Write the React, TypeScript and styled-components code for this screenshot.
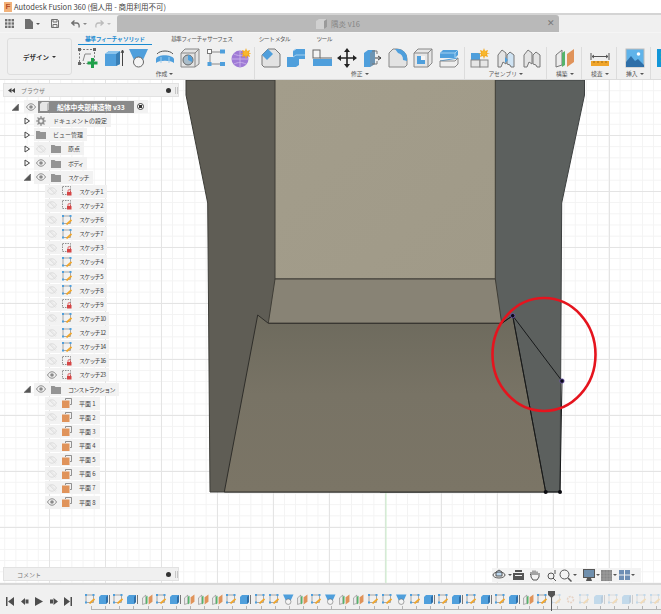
import React from "react";
import styled, { createGlobalStyle } from "styled-components";

const GlobalStyle = createGlobalStyle`
  html, body { margin: 0; padding: 0; }
  body {
    font-family: "Noto Sans CJK JP", "Noto Sans", "Liberation Sans", sans-serif;
    overflow: hidden;
    color: #444;
  }
  svg { display: block; flex: none; }
`;

const BLUE = "#4f9fdc";
const ORANGE = "#e0935a";
const GREEN = "#55b36b";

/* ---------- ribbon icons (20x20) ---------- */

const Ico = ({ children, size = 20 }: { children: React.ReactNode; size?: number }) => (
  <svg width={size} height={size} viewBox="0 0 20 20" fill="none">
    {children}
  </svg>
);

const SketchNew = () => (
  <Ico>
    <rect x="1.500" y="1.500" width="15" height="14" stroke="#777" strokeDasharray="2 1.500" />
    {[[0, 0], [15, 0], [0, 14]].map(([x, y]) => (
      <rect key={`${x}${y}`} x={x} y={y} width="3" height="3" fill="#666" />
    ))}
    <path d="M5 13l2-7h6" stroke="#888" />
    <path d="M14.500 10v10M9.500 15h10" stroke="#1fa04a" strokeWidth="3" />
  </Ico>
);
const Extrude = () => (
  <Ico>
    <path d="M1 6l4-3h11v13l-4 2H1z" fill={BLUE} />
    <path d="M12 6l4-3v13l-4 2z" fill="#3a7fb5" />
    <path d="M1 6l4-3h11l-4 3z" fill="#8cc4ec" />
    <path d="M18.500 18V3M17 5l1.500-3 1.500 3" stroke="#444" />
  </Ico>
);
const Revolve = () => (
  <Ico>
    <path d="M0 1h19l-5 11a5 5 0 0 1-9 0z" fill={BLUE} />
    <circle cx="9.500" cy="14" r="5" fill="#f4f4f4" stroke="#666" />
  </Ico>
);
const Sweep = () => (
  <Ico>
    <path d="M1 15V11C2 6 17 6 19 11v4c-3-3-15-3-18 0z" fill={BLUE} />
    <path d="M2 6c3-4 13-4 16 0" stroke="#555" />
    <path d="M6 9v6M14 9v6" stroke="#a3d0f0" />
  </Ico>
);
const Hole = () => (
  <Ico>
    <path d="M1 5l4-4h14v15l-4 3H1z" fill="#e3e3e3" stroke="#888" />
    <path d="M1 5h14v14M15 5l4-4" stroke="#888" />
    <circle cx="8" cy="12" r="5" fill="#a9bcc9" stroke="#666" />
    <path d="M8 7a5 5 0 0 1 4 7l-4-2z" fill={BLUE} />
  </Ico>
);
const Pattern = () => (
  <Ico>
    <path d="M5 4h10M4 5v11M5 16h10" stroke="#888" />
    <rect x="1.500" y="1.500" width="4" height="4" fill="#fff" stroke="#777" />
    <rect x="14" y="1.500" width="5" height="4" fill={BLUE} />
    <rect x="1.500" y="14" width="4" height="4" fill={BLUE} />
    <rect x="14" y="14" width="5" height="4" fill={BLUE} />
  </Ico>
);
const Sun = ({ cx, cy }: { cx: number; cy: number }) => (
  <>
    <path
      d={`M${cx} ${cy - 5}l1 3 3-1-1 3 3 0-3 1 1 3-3-1-1 3-1-3-3 1 1-3-3-1 3 0-1-3 3 1z`}
      fill="#f3a81f"
    />
    <circle cx={cx} cy={cy} r="2.500" fill="#f8b72d" />
  </>
);
const Form = () => (
  <Ico>
    <circle cx="9" cy="11" r="8.500" fill="#9f7ad6" />
    <path d="M1 11h16M9 3v16M3 6c4 2 8 2 12 0M3 16c4-2 8-2 12 0" stroke="#c7aee9" />
    <Sun cx={15} cy={5} />
  </Ico>
);
const Press = () => (
  <Ico>
    <path d="M1 7l6-6h7l5 5v12l-2 1H3l-2-2z" fill="#e2e2e2" stroke="#777" />
    <path d="M1 7l6-6 5 5-6 6z" fill={BLUE} />
  </Ico>
);
const Steps = () => (
  <Ico>
    <path d="M1 9h6V3l3-2h9v10h-6v6l-3 2H1z" fill={BLUE} />
    <path d="M7 9l3-2h9M7 3l3-2" stroke="#a3d0f0" />
  </Ico>
);
const Align = () => (
  <Ico>
    <rect x="1" y="2" width="7" height="8" fill="#f4f4f4" stroke="#666" />
    <rect x="1" y="11" width="19" height="7" fill={BLUE} />
    <path d="M8 10h12" stroke="#666" />
  </Ico>
);
const MoveIco = () => (
  <Ico>
    <path d="M10 3v14M3 10h14" stroke="#222" strokeWidth="1.600" />
    <path d="M10 0l3 4H7zM10 20l3-4H7zM0 10l4-3v6zM20 10l-4-3v6z" fill="#222" />
  </Ico>
);
const Split = () => (
  <Ico>
    <path d="M1 5l4-3h7v14l-5 3H1z" fill={BLUE} />
    <path d="M7 5l5-3v14l-5 3z" fill="#8a8a8a" opacity=".5" />
    <path d="M9 3h5v3M9 16h5v-3" stroke="#777" />
    <path d="M12 10h6M15 8l3 2-3 2" stroke="#444" />
  </Ico>
);
const Fillet = () => (
  <Ico>
    <path d="M1 5l4-4h4a10 10 0 0 1 10 10v6l-2 2H1z" fill="#e3e3e3" stroke="#888" />
    <path d="M7 1h3a9 9 0 0 1 9 9v3l-4-1a7 7 0 0 0-5-7z" fill={BLUE} />
  </Ico>
);
const Shell = () => (
  <Ico>
    <path d="M1 5l4-4h14v14l-4 4H1z" fill="#e6e6e6" stroke="#888" />
    <path d="M1 5h14v14M15 5l4-4" stroke="#888" />
    <rect x="4" y="8" width="8" height="8" fill="#f5f5f5" />
    <path d="M4 8h4v4h4v4H4z" fill={BLUE} />
  </Ico>
);
const Combine = () => (
  <Ico>
    <path d="M1 5l3-3h15v5l-3 3H1z" fill={BLUE} />
    <path d="M1 5h15v5M16 5l3-3" stroke="#a3d0f0" />
    <path d="M1 13l18-3" stroke={BLUE} />
    <path d="M1 13h15l3-3v6l-3 3H1z" fill="#eee" stroke="#888" />
  </Ico>
);
const CubeSun = () => (
  <Ico>
    <rect x="1" y="5" width="9" height="7" fill={BLUE} />
    <rect x="1" y="12" width="9" height="7" fill="#e6e6e6" stroke="#888" />
    <rect x="10" y="12" width="8" height="7" fill="#e6e6e6" stroke="#888" />
    <Sun cx={14} cy={5} />
  </Ico>
);
const Joint = ({ active }: { active?: boolean }) => (
  <Ico>
    <path d="M2 19V7l4-5 4 3v11l-3-2-2 5z" fill="#e4e4e4" stroke="#777" />
    <path d="M18 19V7l-4-3-3 3v9l3 1 1 2z" fill={active ? "#cfe3f3" : "#e4e4e4"} stroke="#777" />
    {active && <path d="M9 9l3 3-3 3z" fill={BLUE} />}
  </Ico>
);
const Plane = () => (
  <Ico>
    <path d="M1 7l6-5v15l-6 2z" fill="#ececec" stroke="#777" />
    <path d="M7 5l3-2v14l-3 2z" fill={GREEN} />
    <path d="M12 6l7-5v13l-7 5z" fill={ORANGE} />
  </Ico>
);
const Measure = () => (
  <Ico>
    <path d="M1 5v7M19 5v7M2 8.500h16M2 8.500l2-1.500M2 8.500l2 1.500M18 8.500l-2-1.500M18 8.500l-2 1.500" stroke="#555" />
    <rect x="1" y="13" width="18" height="5" fill="#f0a52a" />
    <path d="M4 13v2M8 13v2M12 13v2M16 13v2" stroke="#a36d10" />
  </Ico>
);
const Picture = () => (
  <Ico>
    <rect x="1" y="1" width="18" height="18" fill="#5fb3ea" stroke="#bbb" />
    <circle cx="13.500" cy="6" r="1.800" fill="#fff" />
    <path d="M1 19v-5l5-6 4 5 3-2 6 6v2z" fill="#2f6fa8" />
  </Ico>
);
const SelectIco = () => (
  <Ico>
    <rect x="0" y="1" width="20" height="18" fill="#1296d8" />
    <path d="M3 5h10M3 9h10M3 13h10" stroke="#26b5a0" strokeDasharray="2 2" />
  </Ico>
);

const ribbonGroups = [
  { label: "作成", offset: 0, trail: 3, gap: 5.500, icons: [SketchNew, Extrude, Revolve, Sweep, Hole, Pattern, Form] },
  { label: "修正", offset: 6, trail: 5, gap: 5.400, icons: [Press, Steps, Align, MoveIco, Split, Fillet, Shell, Combine] },
  { label: "アセンブリ", offset: 5, trail: 4, gap: 6, icons: [CubeSun, () => <Joint active />, () => <Joint />] },
  { label: "構築", offset: 8, trail: 6, gap: 0, icons: [Plane] },
  { label: "検査", offset: 8, trail: 6, gap: 0, icons: [Measure] },
  { label: "挿入", offset: 8, trail: 5, gap: 0, icons: [Picture] },
  { label: "選択", offset: 6, trail: 0, gap: 0, icons: [SelectIco] },
];

/* ---------- browser tree icons ---------- */

const EyeIcon = ({ off }: { off?: boolean }) => (
  <svg width="10" height="8" viewBox="0 0 10 8" fill="none">
    <path d="M.5 4C2 1.500 3.500.8 5 .8S8 1.500 9.500 4C8 6.500 6.500 7.200 5 7.200S2 6.500.5 4z" stroke={off ? "#dcdcdc" : "#8a8a8a"} strokeWidth="1" />
    {off ? (
      <path d="M1.500.5l7 7M3 .5l6 6" stroke="#dcdcdc" strokeWidth=".8" />
    ) : (
      <circle cx="5" cy="4" r="1.800" fill="#8a8a8a" />
    )}
  </svg>
);
const FolderIcon = () => (
  <svg width="10" height="9" viewBox="0 0 10 9">
    <path d="M0 1h3.500l1 1H10v7H0z" fill="#949494" />
  </svg>
);
const GearIcon = () => (
  <svg width="10" height="10" viewBox="0 0 10 10" fill="none">
    <circle cx="5" cy="5" r="2.600" stroke="#8f8f8f" strokeWidth="1.800" />
    <path d="M5 0v2M5 8v2M0 5h2M8 5h2M1.500 1.500l1.500 1.500M7 7l1.500 1.500M8.500 1.500L7 3M3 7L1.500 8.500" stroke="#8f8f8f" strokeWidth="1.200" />
  </svg>
);
const SketchLocked = () => (
  <svg width="10" height="10" viewBox="0 0 10 10" fill="none">
    <rect x=".5" y=".5" width="8" height="8" stroke="#777" strokeDasharray="1.500 1" strokeWidth=".8" />
    <rect x="5" y="6" width="4.500" height="3.500" fill="#d64545" />
    <path d="M6 6V4.800a1.200 1.200 0 0 1 2.400 0V6" stroke="#d64545" strokeWidth=".8" />
  </svg>
);
const SketchOpen = () => (
  <svg width="10" height="10" viewBox="0 0 10 10" fill="none">
    <rect x="1" y="1" width="7.500" height="7.500" stroke="#888" strokeWidth=".7" />
    {[[0, 0], [7.500, 0], [0, 7.500]].map(([x, y]) => (
      <rect key={`${x}${y}`} x={x} y={y} width="2" height="2" fill={BLUE} />
    ))}
    <path d="M4.500 9.500L9.500 5" stroke="#f0a52a" strokeWidth="1.700" />
  </svg>
);
const PlaneIcon = () => (
  <svg width="10" height="10" viewBox="0 0 10 10" fill="none">
    <path d="M3.500 2V.5h6v6H8" stroke="#777" strokeWidth=".8" />
    <rect x="0" y="2.500" width="7.500" height="7.500" fill="#e0935a" />
  </svg>
);
const Caret = ({ open }: { open: boolean }) => (
  <svg width="7" height="8" viewBox="0 0 7 8">
    {open ? (
      <path d="M0 7.500L6.500 1v6.500z" fill="#555" stroke="#555" strokeWidth=".5" />
    ) : (
      <path d="M1 1l4.500 3L1 7z" fill="#fff" stroke="#444" />
    )}
  </svg>
);

type TreeRow = {
  level: 1 | 2;
  text: string;
  eye?: "on" | "off";
  icon: React.ComponentType;
  open?: boolean;
  tight?: boolean;
};

const sk = (n: number, icon: React.ComponentType, eye: "on" | "off" = "off"): TreeRow => ({
  level: 2,
  text: `スケッチ ${n}`,
  eye,
  icon,
  tight: true,
});
const pl = (n: number, eye: "on" | "off" = "off"): TreeRow => ({
  level: 2,
  text: `平面 ${n}`,
  eye,
  icon: PlaneIcon,
});

const treeRows: TreeRow[] = [
  { level: 1, text: "ドキュメントの設定", icon: GearIcon, open: false },
  { level: 1, text: "ビュー管理", icon: FolderIcon, open: false },
  { level: 1, text: "原点", eye: "off", icon: FolderIcon, open: false },
  { level: 1, text: "ボディ", eye: "on", icon: FolderIcon, open: false, tight: true },
  { level: 1, text: "スケッチ", eye: "on", icon: FolderIcon, open: true, tight: true },
  sk(1, SketchLocked),
  sk(2, SketchLocked),
  sk(6, SketchOpen),
  sk(7, SketchOpen),
  sk(3, SketchLocked),
  sk(4, SketchOpen),
  sk(5, SketchOpen),
  sk(8, SketchOpen),
  sk(9, SketchLocked),
  sk(10, SketchOpen),
  sk(12, SketchOpen),
  sk(14, SketchOpen),
  sk(16, SketchLocked),
  sk(23, SketchLocked, "on"),
  { level: 1, text: "コンストラクション", eye: "on", icon: FolderIcon, open: true, tight: true },
  pl(1), pl(2), pl(3), pl(4), pl(5), pl(6), pl(7), pl(8, "on"),
];

/* ---------- timeline ---------- */

const timeline = "s e s e p s e p p p s e s s r p s r p p s s r s e s e s e s e p s".split(" ");
const future = "s x s e s e s s".split(" ");

const TimelineIcon = ({ kind }: { kind: string }) => {
  if (kind === "s") return <SketchOpen />;
  if (kind === "e")
    return (
      <svg width="11" height="11" viewBox="0 0 11 11">
        <path d="M0 3l2-2h7v7L7 10H0z" fill={BLUE} />
        <path d="M7 3l2-2v7l-2 2z" fill="#2f6fa8" />
        <path d="M10.500 1v9" stroke="#777" />
      </svg>
    );
  if (kind === "p") return <Ico size={11}><Plane /></Ico>;
  if (kind === "r") return <Ico size={11}><Revolve /></Ico>;
  return (
    <svg width="11" height="11" viewBox="0 0 11 11" fill="none">
      <circle cx="5.500" cy="5.500" r="3" stroke="#d08a5a" strokeWidth="1.500" strokeDasharray="2 1" />
    </svg>
  );
};

/* ---------- layout ---------- */

const Page = styled.div`
  width: 661px;
  height: 614px;
  display: flex;
  flex-direction: column;
  overflow: hidden;
  background: #fff;
`;

const TitleBar = styled.div`
  height: 13px;
  flex: none;
  display: flex;
  align-items: center;
  gap: 2px;
  padding-left: 4px;
  background: #fff;
  font-size: 7.500px;
  color: #444;
  white-space: nowrap;
  line-height: 13px;
`;

const AppBadge = styled.span`
  width: 8px;
  height: 10px;
  background: #f2b27a;
  color: #b9502a;
  font: bold 8px/10px "Liberation Sans", sans-serif;
  text-align: center;
`;

const TabStrip = styled.div`
  height: 17px;
  flex: none;
  display: flex;
  border-top: 2px solid #d4d4d4;
  background: #f0f0f0;
`;

const QuickTools = styled.div`
  width: 117px;
  flex: none;
  display: flex;
  align-items: center;
  padding-left: 5px;
  box-sizing: border-box;
`;

const QuickTool = styled.span<{ $w: number }>`
  width: ${(p) => p.$w}px;
  display: flex;
  align-items: center;
  gap: 3px;
`;

const MiniCaret = styled.i<{ $color?: string }>`
  display: inline-block;
  border-left: 2px solid transparent;
  border-right: 2px solid transparent;
  border-top: 2px solid ${(p) => p.$color ?? "#555"};
`;

const DocTab = styled.div`
  width: 442px;
  flex: none;
  display: flex;
  align-items: center;
  justify-content: center;
  gap: 4px;
  position: relative;
  background: #b9b9b9;
  border-radius: 3px 3px 0 0;
  font-size: 7.500px;
  color: #858585;
`;

const TabClose = styled.span`
  position: absolute;
  right: 4px;
  top: 2px;
  font: 9px/12px "Liberation Sans", sans-serif;
  color: #777;
`;

const Ribbon = styled.div`
  height: 48px;
  flex: none;
  display: flex;
  background: #f0f0f0;
  border-top: 1px solid #f5f5f5;
  box-sizing: border-box;
  padding-left: 7px;
  border-bottom: 1px solid #dcdcdc;
  overflow: hidden;
`;

const DesignButton = styled.div`
  width: 65px;
  height: 37px;
  flex: none;
  margin: 5px 6px 0 0;
  box-sizing: border-box;
  display: flex;
  align-items: center;
  justify-content: center;
  gap: 3px;
  border: 1px solid #dedede;
  border-radius: 3px;
  font-size: 6.500px;
  font-weight: 700;
  color: #333;
`;

const RibbonBody = styled.div`
  display: flex;
  flex: none;
  flex-direction: column;
  white-space: nowrap;
`;

const TabRow = styled.div`
  height: 13px;
  display: flex;
  gap: 12.500px;
`;

const RibbonTab = styled.div<{ $active?: boolean }>`
  height: 12px;
  padding: 0 7px;
  font-size: 5.800px;
  letter-spacing: ${(p) => (p.$active ? "-0.45px" : "-0.7px")};
  line-height: 11px;
  font-weight: ${(p) => (p.$active ? 700 : 400)};
  color: ${(p) => (p.$active ? "#1a8ad0" : "#555")};
  border-bottom: 1.500px solid ${(p) => (p.$active ? "#1a8ad0" : "transparent")};
  box-sizing: border-box;
`;

const Groups = styled.div`
  display: flex;
  padding-top: 2px;
`;

const Group = styled.div<{ $offset: number; $trail: number }>`
  display: flex;
  flex-direction: column;
  align-items: center;
  padding: 0 ${(p) => p.$trail}px 0 ${(p) => p.$offset}px;
  border-right: 1px solid #dcdcdc;
  height: 32px;
  &:last-child { border-right: 0; }
`;

const GroupIcons = styled.div<{ $gap: number }>`
  display: flex;
  gap: ${(p) => p.$gap}px;
  height: 22px;
  align-items: center;
`;

const GroupLabel = styled.div`
  display: flex;
  align-items: center;
  gap: 2px;
  font-size: 5.800px;
  line-height: 9px;
  color: #555;
`;

const Viewport = styled.div`
  flex: 1;
  position: relative;
  overflow: hidden;
  background-color: #fff;
  background-image:
    linear-gradient(#e4e4e4 1px, transparent 1px),
    linear-gradient(90deg, #e4e4e4 1px, transparent 1px),
    linear-gradient(#f3f3f3 1px, transparent 1px),
    linear-gradient(90deg, #f3f3f3 1px, transparent 1px);
  background-size: 56px 56px, 56px 56px, 11.200px 11.200px, 11.200px 11.200px;
  background-position: 0 55px, 49px 0, 0 55px, 49px 0;
`;

const ModelCanvas = styled.svg`
  position: absolute;
  inset: 0;
  width: 661px;
  height: 503px;
`;

const BrowserPanel = styled.div`
  position: absolute;
  left: 3px;
  top: 3px;
  width: 176px;
`;

const PanelHeader = styled.div`
  height: 14px;
  display: flex;
  align-items: center;
  gap: 6px;
  padding: 0 0 0 4px;
  background: #f0f0f0;
  border: 1px solid #e2e2e2;
  box-sizing: border-box;
  font-size: 6px;
  color: #777;
`;

const PanelDot = styled.span`
  margin-left: auto;
  width: 5px;
  height: 5px;
  border-radius: 50%;
  background: #333;
`;

const PanelGrip = styled.span`
  width: 1px;
  height: 7px;
  border: 1px solid #c6c6c6;
  border-width: 0 1px;
  margin: 0 0 0 -2px;
`;

const Tree = styled.div`
  margin: 2.500px 0 0 -3px;
`;

const Row = styled.div<{ $left: number }>`
  height: 14.130px;
  display: flex;
  align-items: center;
  padding-left: ${(p) => p.$left}px;
`;

const ExpanderSlot = styled.span<{ $w: number }>`
  width: ${(p) => p.$w}px;
  display: flex;
  align-items: center;
`;

const Chip = styled.div`
  height: 13px;
  display: inline-flex;
  align-items: center;
  padding: 0 4px 0 2px;
  background: #f2f2f2;
  white-space: nowrap;
`;

const EyeSlot = styled.span<{ $trail?: number }>`
  width: 10px;
  margin-right: ${(p) => p.$trail ?? 5}px;
  display: flex;
`;

const IconSlot = styled.span`
  width: 10px;
  margin-right: 7px;
  display: flex;
`;

const RowText = styled.span<{ $tight?: boolean }>`
  font-size: 6px;
  color: #3e3e3e;
  letter-spacing: ${(p) => (p.$tight ? "-0.8px" : "0")};
`;

const RootPill = styled.span`
  width: 96px;
  height: 12px;
  display: flex;
  align-items: center;
  background: #8a8a8a;
  color: #fff;
  font-size: 6.800px;
  font-weight: 700;
  padding-left: 2px;
  box-sizing: border-box;
  gap: 8px;
`;

const RootRadio = styled.span`
  width: 7px;
  height: 7px;
  margin-left: 3px;
  border-radius: 50%;
  border: 1px solid #444;
  box-sizing: border-box;
  background: radial-gradient(circle, #333 0 1.500px, #fff 2px);
`;

const CommentBar = styled(PanelHeader)`
  position: absolute;
  left: 3px;
  bottom: 2px;
  width: 176px;
  padding-left: 13px;
`;

const NavBar = styled.div`
  position: absolute;
  left: 492px;
  bottom: 1px;
  width: 149px;
  height: 14px;
  display: flex;
  align-items: center;
  background: #f3f3f3;
`;

const NavItem = styled.span<{ $w: number }>`
  width: ${(p) => p.$w}px;
  display: flex;
  align-items: center;
  gap: 1px;
`;

const Timeline = styled.div`
  height: 31px;
  flex: none;
  display: flex;
  align-items: center;
  background: #f0f0f0;
  border-top: 2px solid #d8d8d8;
  box-sizing: border-box;
  overflow: hidden;
`;

const Player = styled.div`
  width: 85px;
  flex: none;
  display: flex;
  padding-left: 6px;
  gap: 6.500px;
  box-sizing: border-box;
  margin-top: 3px;
`;

const Track = styled.div`
  position: relative;
  flex: 1;
  align-self: stretch;
  display: flex;
  gap: 3.130px;
  padding-top: 9px;
  box-sizing: border-box;
  &::after {
    content: "";
    position: absolute;
    left: 6px;
    right: 0;
    top: 21px;
    height: 3px;
    border-bottom: 1px solid #b5b5b5;
    background: repeating-linear-gradient(90deg, #b5b5b5 0 1px, transparent 1px 14.130px);
  }
`;

const Step = styled.span<{ $faded?: boolean }>`
  width: 11px;
  height: 11px;
  flex: none;
  opacity: ${(p) => (p.$faded ? 0.28 : 1)};
`;

const Marker = styled.svg`
  position: absolute;
  left: 462.500px;
  top: 6px;
  width: 7px;
  height: 20px;
  z-index: 1;
`;

const PlayerBtn = ({ d }: { d: string }) => (
  <svg width="8" height="9" viewBox="0 0 8 9">
    <path d={d} fill="#4d4d4d" />
  </svg>
);

const playerButtons = [
  "M0 0h1.500v9H0zM8 0v9L2 4.500z",
  "M0 4.500L4 1v7zM4.500 2.500h3v4h-3z",
  "M0 0l8 4.500L0 9z",
  "M0 2.500h3v4H0zM3.500 1L8 4.500 3.500 8z",
  "M0 0l6 4.500L0 9zM6.500 0H8v9H6.500z",
];

const quickIconColor = "#6f6f6f";

export default function App() {
  return (
    <Page>
      <GlobalStyle />
      <TitleBar>
        <AppBadge>F</AppBadge>
        Autodesk Fusion 360 (個人用 - 商用利用不可)
      </TitleBar>

      <TabStrip>
        <QuickTools>
          <QuickTool $w={20}>
            <svg width="9" height="9" viewBox="0 0 9 9" fill={quickIconColor}>
              {[0, 3.300, 6.600].flatMap((y) =>
                [0, 3.300, 6.600].map((x) => <rect key={`${x}-${y}`} x={x} y={y} width="2.400" height="2.400" />)
              )}
            </svg>
          </QuickTool>
          <QuickTool $w={26}>
            <svg width="8" height="10" viewBox="0 0 8 10" fill={quickIconColor}><path d="M0 0h5l3 3v7H0z" /></svg>
            <MiniCaret />
          </QuickTool>
          <QuickTool $w={20}>
            <svg width="8" height="9" viewBox="0 0 8 9" fill="none" stroke={quickIconColor}><path d="M.5.500h6l1 1v7h-7z" /><path d="M2 .5v2.500h4V.5M2 8.500V5.500h4v3" /></svg>
          </QuickTool>
          <QuickTool $w={24}>
            <svg width="9" height="8" viewBox="0 0 9 8" fill="none" stroke={quickIconColor} strokeWidth="1.300"><path d="M3.500.5L.8 3l2.700 2.500M1 3h4.500c2 0 3 1.500 2.500 4.500" /></svg>
            <MiniCaret $color="#888" />
          </QuickTool>
          <QuickTool $w={20}>
            <svg width="9" height="8" viewBox="0 0 9 8" fill="none" stroke="#bbb" strokeWidth="1.300"><path d="M5.500.5L8.200 3 5.500 5.500M8 3H3.500c-2 0-3 1.500-2.500 4.500" /></svg>
            <MiniCaret $color="#bbb" />
          </QuickTool>
        </QuickTools>
        <DocTab>
          <svg width="11" height="10" viewBox="0 0 11 10">
            <path d="M0 2l3-2h8v8l-3 2H0z" fill="#d0d0d0" />
            <path d="M8 2l3-2v8l-3 2z" fill="#9a9a9a" />
          </svg>
          隅炎 v16
          <TabClose>✕</TabClose>
        </DocTab>
      </TabStrip>

      <Ribbon>
        <DesignButton>
          デザイン <MiniCaret $color="#333" />
        </DesignButton>
        <RibbonBody>
          <TabRow>
            <RibbonTab $active>基準フィーチャ ソリッド</RibbonTab>
            <RibbonTab>基準フィーチャ サーフェス</RibbonTab>
            <RibbonTab>シート メタル</RibbonTab>
            <RibbonTab>ツール</RibbonTab>
          </TabRow>
          <Groups>
            {ribbonGroups.map((g) => (
              <Group key={g.label} $offset={g.offset} $trail={g.trail}>
                <GroupIcons $gap={g.gap}>
                  {g.icons.map((Icon, i) => (
                    <Icon key={i} />
                  ))}
                </GroupIcons>
                <GroupLabel>
                  {g.label}
                  {g.label !== "選択" && <MiniCaret />}
                </GroupLabel>
              </Group>
            ))}
          </Groups>
        </RibbonBody>
      </Ribbon>

      <Viewport>
        <ModelCanvas viewBox="0 80 661 503">
          <defs>
            <linearGradient id="frontFloor" x1="0" y1="0" x2="0" y2="1">
              <stop offset="0" stopColor="#6d6a5d" />
              <stop offset=".45" stopColor="#787365" />
              <stop offset="1" stopColor="#7b7566" />
            </linearGradient>
            <linearGradient id="backWall" x1="0" y1="0" x2="1" y2="1">
              <stop offset="0" stopColor="#a39d8b" />
              <stop offset="1" stopColor="#a09a88" />
            </linearGradient>
          </defs>
          <path d="M386 492v91" stroke="#c9efc9" />
          <path d="M186 80v15l21.700 108 2.300 289h220V80z" fill="#5f5d55" stroke="#3d3d38" />
          <path d="M380 80h204.500v15L561.700 203 560 492H380z" fill="#5c605e" stroke="#3d4040" />
          <rect x="275" y="79" width="220.300" height="200" fill="url(#backWall)" stroke="#3f3d36" />
          <path d="M275 279h220.300l6.400 44.300H268.300z" fill="#888375" stroke="#3f3d36" />
          <path
            d="M257.700 315l10.600 8.300h233.400l11-7.600 33 176.300H224.300z"
            fill="url(#frontFloor)"
            stroke="#2f2e2a"
          />
          <path
            d="M501.700 323.300l11-7.600M512.700 315.700L562 381M512.700 315.700L545.700 492H560M562 381l-2 111"
            fill="none"
            stroke="#17191a"
            strokeWidth="1"
          />
          {[[545.700, 492], [560, 492]].map(([x, y]) => (
            <circle key={x} cx={x} cy={y} r="2" fill="#0b0b10" />
          ))}
          {[[512.700, 315.700], [562, 381]].map(([x, y]) => (
            <circle key={x} cx={x} cy={y} r="2.200" fill="#0b0b18" stroke="#7a5fc0" strokeWidth=".7" />
          ))}
          <ellipse cx="544" cy="354.500" rx="51.500" ry="56.500" fill="none" stroke="#e5141e" strokeWidth="2.600" />
        </ModelCanvas>

        <BrowserPanel>
          <PanelHeader>
            <svg width="7" height="5" viewBox="0 0 7 5" fill="#444"><path d="M3.500 0v5L0 2.500zM7 0v5L3.500 2.500z" /></svg>
            <span>ブラウザ</span>
            <PanelDot />
            <PanelGrip />
          </PanelHeader>
          <Tree>
            <Row $left={12}>
              <ExpanderSlot $w={12}><Caret open /></ExpanderSlot>
              <Chip>
                <EyeSlot $trail={2}><EyeIcon /></EyeSlot>
                <RootPill>
                  <svg width="9" height="9" viewBox="0 0 9 9">
                    <path d="M0 2l2-2h7v7L7 9H0z" fill="#e6e6e6" />
                    <path d="M7 2l2-2v7L7 9z" fill="#bdbdbd" />
                  </svg>
                  船体中央部構造物 v33
                </RootPill>
                <RootRadio />
              </Chip>
            </Row>
            {treeRows.map((r) => (
              <Row key={r.text} $left={r.level === 1 ? 24 : 45}>
                {r.level === 1 && (
                  <ExpanderSlot $w={10}><Caret open={!!r.open} /></ExpanderSlot>
                )}
                <Chip>
                  {r.eye && (
                    <EyeSlot><EyeIcon off={r.eye === "off"} /></EyeSlot>
                  )}
                  <IconSlot><r.icon /></IconSlot>
                  <RowText $tight={r.tight}>{r.text}</RowText>
                </Chip>
              </Row>
            ))}
          </Tree>
        </BrowserPanel>

        <CommentBar>
          コメント
          <PanelDot />
          <PanelGrip />
        </CommentBar>

        <NavBar>
          <NavItem $w={21}>
            <svg width="15" height="12" viewBox="0 0 15 12" fill="none" stroke="#555">
              <path d="M7 1l3 2v4H4V3z" fill="#bcd7ee" />
              <ellipse cx="7" cy="6" rx="6" ry="3" />
            </svg>
            <MiniCaret />
          </NavItem>
          <NavItem $w={16}>
            <svg width="11" height="10" viewBox="0 0 11 10" fill="#555"><path d="M0 3h11v7H0zM2 0h7v2H2z" /><path d="M2 5h7v1H2z" fill="#f3f3f3" /></svg>
          </NavItem>
          <NavItem $w={18}>
            <svg width="11" height="12" viewBox="0 0 11 12" fill="none" stroke="#555"><path d="M2 6V3M4 6V1.500M6 6V1.500M8 6V2.500M2 6L1 5M2 6v2l2 3h4l2-3V4" /></svg>
          </NavItem>
          <NavItem $w={12}>
            <svg width="10" height="11" viewBox="0 0 10 11" fill="none" stroke="#555"><circle cx="4" cy="6" r="3" /><path d="M6 8l3 3M8 0v4" /></svg>
          </NavItem>
          <NavItem $w={24}>
            <svg width="13" height="13" viewBox="0 0 13 13" fill="none" stroke="#555"><circle cx="5.500" cy="5.500" r="4.500" /><path d="M9 9l3.500 3.500" strokeWidth="1.500" /></svg>
            <MiniCaret />
          </NavItem>
          <NavItem $w={18}>
            <svg width="12" height="12" viewBox="0 0 12 12"><rect x=".5" y=".5" width="11" height="8" fill="#6f8fad" stroke="#555" /><path d="M4 9h4l1 3H3z" fill="#555" /></svg>
            <MiniCaret />
          </NavItem>
          <NavItem $w={18}>
            <svg width="11" height="11" viewBox="0 0 11 11"><rect width="11" height="11" fill="#888" /><path d="M3 0v11M6 0v11M9 0v11M0 3h11M0 6h11M0 9h11" stroke="#aaa" strokeWidth=".6" /></svg>
            <MiniCaret />
          </NavItem>
          <NavItem $w={14}>
            <svg width="11" height="10" viewBox="0 0 11 10"><rect width="11" height="10" fill="#6f8fb5" /><path d="M5.500 0v10M0 5h11" stroke="#f3f3f3" /></svg>
            <MiniCaret />
          </NavItem>
        </NavBar>
      </Viewport>

      <Timeline>
        <Player>
          {playerButtons.map((d) => (
            <PlayerBtn key={d} d={d} />
          ))}
        </Player>
        <Track>
          {timeline.map((k, i) => (
            <Step key={i}><TimelineIcon kind={k} /></Step>
          ))}
          {future.map((k, i) => (
            <Step key={i} $faded><TimelineIcon kind={k} /></Step>
          ))}
          <Marker viewBox="0 0 7 20">
            <path d="M0 0h7v4L3.500 7 0 4z" fill="#555" />
            <path d="M3.500 6v14" stroke="#555" />
          </Marker>
        </Track>
      </Timeline>
    </Page>
  );
}
